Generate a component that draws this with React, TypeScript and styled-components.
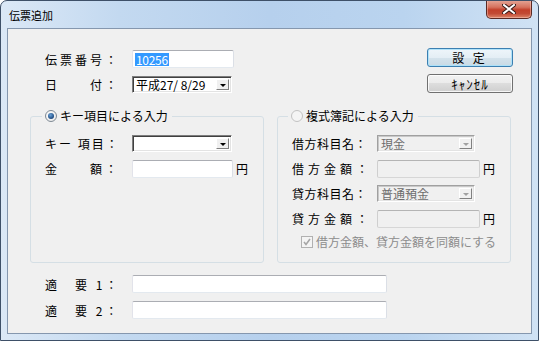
import styled, { createGlobalStyle } from "styled-components";

const GlobalStyle = createGlobalStyle`
  html, body {
    margin: 0;
    padding: 0;
    background: #ffffff;
  }
  body {
    font-family: "Noto Sans CJK JP", "Liberation Sans", sans-serif;
    font-size: 12px;
    color: #000;
  }
`;

const Window = styled.div`
  width: 539px;
  height: 341px;
  box-sizing: border-box;
  border: 1px solid #3e5068;
  border-radius: 7px 7px 0 0;
  background: linear-gradient(90deg, #dbe8f6 0%, #c3d9f0 22%, #b6d0ed 50%, #bad4ef 75%, #d0e2f4 100%);
  display: flex;
  flex-direction: column;
  overflow: hidden;
`;

const TitleBar = styled.div`
  height: 27px;
  flex: none;
  display: flex;
  align-items: flex-start;
  justify-content: space-between;
`;

const Title = styled.span`
  margin: 6px 0 0 8px;
  font-size: 11px;
  line-height: 16px;
  color: #000;
`;

const CloseButton = styled.div`
  width: 46px;
  height: 19px;
  margin: -1px 6px 0 0;
  box-sizing: border-box;
  border: 1px solid #5a2a24;
  border-top: none;
  border-radius: 0 0 5px 5px;
  background: linear-gradient(#e6a899 0%, #d6725e 40%, #c2402a 55%, #c24a34 75%, #dc8468 100%);
  box-shadow: inset 0 0 0 1px rgba(255, 210, 200, 0.45);
  display: flex;
  align-items: center;
  justify-content: center;
`;

const Client = styled.div`
  flex: 1;
  margin: 0 6px 6px 6px;
  background: #f0f0f0;
  border: 1px solid #8597ae;
  padding: 19px 20px 0 22px;
  display: flex;
  flex-direction: column;
`;

const TopSection = styled.div`
  display: flex;
  justify-content: space-between;
  padding-left: 15px;
  margin-right: -2px;
`;

const FieldStack = styled.div<{ $gap: number }>`
  display: flex;
  flex-direction: column;
  gap: ${(p) => p.$gap}px;
`;

const TopFields = styled(FieldStack)`
  padding-top: 2px;
`;

const Row = styled.div<{ $h?: number }>`
  display: flex;
  align-items: center;
  height: ${(p) => p.$h ?? 17}px;
`;

const Label = styled.span<{ $w: number; $ls: number }>`
  width: ${(p) => p.$w}px;
  flex: none;
  letter-spacing: ${(p) => p.$ls}px;
  white-space: pre;
  font-size: 12px;
  line-height: 17px;
`;

const TextBox = styled.div<{ $w: number; $disabled?: boolean }>`
  width: ${(p) => p.$w}px;
  height: 18px;
  box-sizing: border-box;
  border: 1px solid;
  border-color: ${(p) =>
    p.$disabled ? "#b4b4b4 #cfcfcf #d6d6d6 #cfcfcf" : "#abadb3 #dbdfe6 #e3e9ef #e2e3ea"};
  border-radius: 2px;
  background: ${(p) => (p.$disabled ? "#f0f0f0" : "#ffffff")};
  padding-left: 2px;
  display: flex;
  align-items: center;
  font-size: 12px;
  line-height: 14px;
`;

const Selected = styled.span`
  background: #3399ff;
  color: #fff;
  padding: 0 1px;
  font-size: 12px;
  line-height: 13px;
  letter-spacing: -0.3px;
`;

const ComboBox = styled.div<{ $w: number; $disabled?: boolean }>`
  width: ${(p) => p.$w}px;
  height: 17px;
  box-sizing: border-box;
  border: 1px solid;
  border-color: ${(p) => (p.$disabled ? "#a0a0a0 #ffffff #ffffff #a0a0a0" : "#7d7d7d #ffffff #ffffff #7d7d7d")};
  box-shadow: ${(p) =>
    p.$disabled
      ? "inset 1px 1px 0 #c8c8c8, inset -1px -1px 0 #e3e3e3"
      : "inset 1px 1px 0 #404040, inset -1px -1px 0 #e3e3e3"};
  background: ${(p) => (p.$disabled ? "#f0f0f0" : "#ffffff")};
  color: ${(p) => (p.$disabled ? "#6d6d6d" : "#000")};
  display: flex;
  align-items: center;
  padding: 0 2px 0 3px;
  font-size: 12px;
  line-height: 14px;
  white-space: pre;
`;

const DropButton = styled.span<{ $disabled?: boolean }>`
  margin-left: auto;
  width: 13px;
  height: 11px;
  box-sizing: border-box;
  border: 1px solid;
  border-color: #ffffff #808080 #808080 #ffffff;
  background: #f0f0f0;
  display: flex;
  align-items: flex-end;
  justify-content: center;
  padding-bottom: 2px;
  &::after {
    content: "";
    border-left: 3px solid transparent;
    border-right: 3px solid transparent;
    border-top: 3px solid ${(p) => (p.$disabled ? "#a0a0a0" : "#000")};
  }
`;

const Unit = styled.span`
  margin-left: 3px;
  font-size: 12px;
`;

const ButtonColumn = styled.div`
  display: flex;
  flex-direction: column;
  gap: 7px;
`;

const PushButton = styled.button<{ $default?: boolean; $ls?: number; $size?: number }>`
  width: 86px;
  height: 19px;
  padding: 0;
  font-family: "Noto Sans CJK JP", "Liberation Sans", sans-serif;
  font-size: ${(p) => p.$size ?? 12}px;
  letter-spacing: ${(p) => p.$ls ?? 0}px;
  line-height: 14px;
  color: #000;
  border: 1px solid ${(p) => (p.$default ? "#3c7fb1" : "#707070")};
  border-radius: 3px;
  background: ${(p) =>
    p.$default
      ? "linear-gradient(#eef5fa 0%, #e4eef5 50%, #d5e3ec 50%, #c9dae5 100%)"
      : "linear-gradient(#f2f2f2 0%, #ebebeb 50%, #dddddd 50%, #cfcfcf 100%)"};
  box-shadow: inset 0 0 0 1px ${(p) => (p.$default ? "rgba(170, 225, 250, 0.9)" : "rgba(255, 255, 255, 0.8)")};
`;

const Groups = styled.div`
  display: flex;
  gap: 13px;
  margin-top: 16px;
`;

const GroupBox = styled.fieldset`
  flex: 1;
  min-width: 0;
  margin: 0;
  padding: 12px 10px 13px 14px;
  border: 1px solid #d5dfe5;
  border-radius: 3px;
`;

const Legend = styled.legend<{ $shift: number }>`
  display: flex;
  align-items: center;
  gap: 3px;
  padding: 0 4px 0 3px;
  margin-left: ${(p) => p.$shift}px;
  font-size: 12px;
  line-height: 14px;
`;

const Radio = styled.span<{ $checked?: boolean; $disabled?: boolean }>`
  width: 12px;
  height: 12px;
  box-sizing: border-box;
  border-radius: 50%;
  border: 1px solid ${(p) => (p.$disabled ? "#c2c2c2" : "#7f8a95")};
  background: ${(p) =>
    p.$disabled ? "#f4f4f4" : "radial-gradient(circle at 40% 40%, #ffffff 0%, #e4e4e4 100%)"};
  display: flex;
  align-items: center;
  justify-content: center;
  &::after {
    content: "";
    display: ${(p) => (p.$checked ? "block" : "none")};
    width: 6px;
    height: 6px;
    border-radius: 50%;
    background: radial-gradient(circle at 40% 35%, #6aa2d8 0%, #1d4a80 70%, #123055 100%);
  }
`;

const CheckRow = styled.div`
  display: flex;
  align-items: center;
  gap: 3px;
  margin-top: 8px;
  padding-left: 9px;
  color: #8d8d8d;
  font-size: 12px;
  line-height: 14px;
`;

const CheckBox = styled.span`
  width: 12px;
  height: 12px;
  box-sizing: border-box;
  border: 1px solid #b1b1b1;
  background: #f4f4f4;
  display: flex;
  align-items: center;
  justify-content: center;
`;

const BottomSection = styled(FieldStack)`
  margin-top: 12px;
  padding-left: 15px;
`;

export default function App() {
  return (
    <>
      <GlobalStyle />
      <Window>
        <TitleBar>
          <Title>伝票追加</Title>
          <CloseButton>
            <svg width="14" height="10" viewBox="0 0 14 10">
              <path d="M2 1 L12 9 M12 1 L2 9" stroke="#3a1a16" strokeWidth="4" strokeLinecap="square" />
              <path d="M2 1 L12 9 M12 1 L2 9" stroke="#ffffff" strokeWidth="2" strokeLinecap="square" />
            </svg>
          </CloseButton>
        </TitleBar>
        <Client>
          <TopSection>
            <TopFields $gap={8}>
              <Row $h={18}>
                <Label $w={87} $ls={3}>伝票番号：</Label>
                <TextBox $w={102}>
                  <Selected>10256</Selected>
                </TextBox>
              </Row>
              <Row>
                <Label $w={87} $ls={3}>日　　付：</Label>
                <ComboBox $w={100}>
                  平成27/ 8/29
                  <DropButton />
                </ComboBox>
              </Row>
            </TopFields>
            <ButtonColumn>
              <PushButton $default $ls={3}>設 定</PushButton>
              <PushButton $size={13} $ls={1}>ｷｬﾝｾﾙ</PushButton>
            </ButtonColumn>
          </TopSection>

          <Groups>
            <GroupBox>
              <Legend $shift={-3}>
                <Radio $checked />
                キー項目による入力
              </Legend>
              <FieldStack $gap={8}>
                <Row>
                  <Label $w={87} $ls={2}>キー 項目：</Label>
                  <ComboBox $w={100}>
                    <DropButton />
                  </ComboBox>
                </Row>
                <Row>
                  <Label $w={87} $ls={3}>金　　額：</Label>
                  <TextBox $w={101} />
                  <Unit>円</Unit>
                </Row>
              </FieldStack>
            </GroupBox>

            <GroupBox>
              <Legend $shift={-4}>
                <Radio $disabled />
                複式簿記による入力
              </Legend>
              <FieldStack $gap={8}>
                <Row>
                  <Label $w={85} $ls={0.5}>借方科目名：</Label>
                  <ComboBox $w={98} $disabled>
                    現金
                    <DropButton $disabled />
                  </ComboBox>
                </Row>
                <Row>
                  <Label $w={85} $ls={4}>借方金額：</Label>
                  <TextBox $w={103} $disabled />
                  <Unit>円</Unit>
                </Row>
                <Row>
                  <Label $w={85} $ls={0.5}>貸方科目名：</Label>
                  <ComboBox $w={98} $disabled>
                    普通預金
                    <DropButton $disabled />
                  </ComboBox>
                </Row>
                <Row>
                  <Label $w={85} $ls={4}>貸方金額：</Label>
                  <TextBox $w={103} $disabled />
                  <Unit>円</Unit>
                </Row>
              </FieldStack>
              <CheckRow>
                <CheckBox>
                  <svg width="8" height="8" viewBox="0 0 8 8">
                    <path d="M1 4 L3 6.5 L7 1" fill="none" stroke="#a6a6a6" strokeWidth="1.6" />
                  </svg>
                </CheckBox>
                借方金額、貸方金額を同額にする
              </CheckRow>
            </GroupBox>
          </Groups>

          <BottomSection $gap={8}>
            <Row $h={18}>
              <Label $w={87} $ls={3}>適　要 1：</Label>
              <TextBox $w={255} />
            </Row>
            <Row $h={18}>
              <Label $w={87} $ls={3}>適　要 2：</Label>
              <TextBox $w={255} />
            </Row>
          </BottomSection>
        </Client>
      </Window>
    </>
  );
}
